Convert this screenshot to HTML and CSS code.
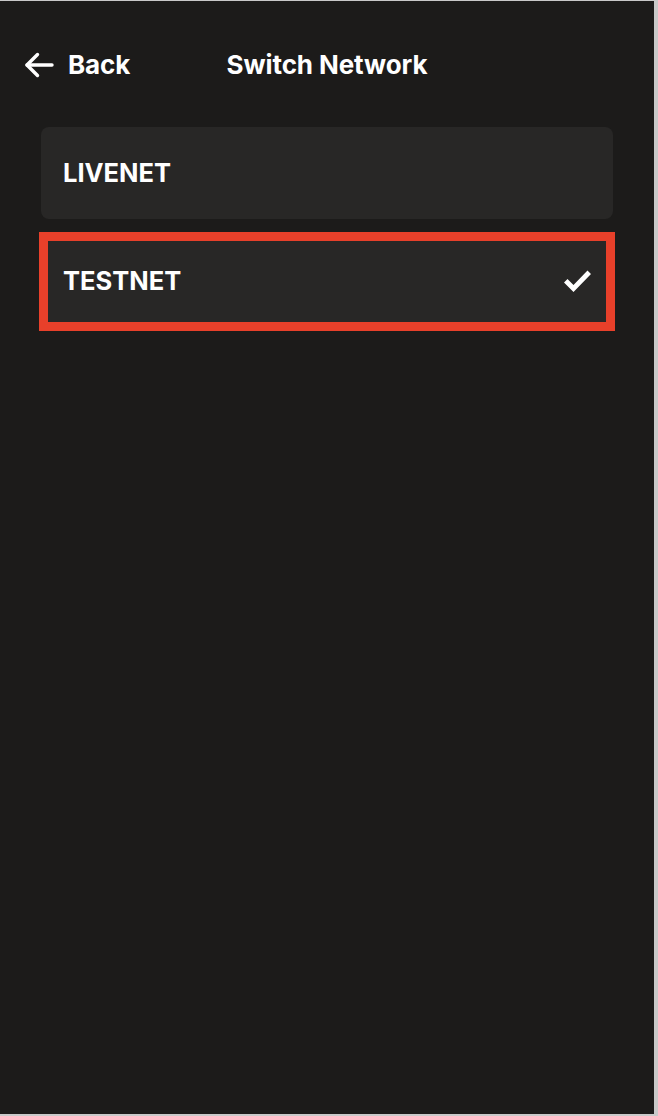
FILE: index.html
```html
<!DOCTYPE html>
<html>
<head>
<meta charset="utf-8">
<link rel="stylesheet" href="styles.css">
</head>
<body>
<div class="app">
  <header class="header">
    <div class="back">
      <svg class="back-icon" width="30" height="26" viewBox="0 0 30 26" fill="none" stroke="#fff" stroke-width="3.4" stroke-linecap="round" stroke-linejoin="round">
        <path d="M28 13H3"/>
        <path d="M13.5 2.5L3 13l10.5 10.5"/>
      </svg>
      <span class="back-label">Back</span>
    </div>
    <h1 class="title">Switch Network</h1>
    <div class="spacer"></div>
  </header>
  <main class="list">
    <div class="item">
      <span class="item-label">LIVENET</span>
    </div>
    <div class="item selected">
      <span class="item-label">TESTNET</span>
      <svg class="check" width="29" height="24" viewBox="0 0 29 24">
        <path d="M1 13.5L4.5 10 10.5 16 24.5 1.5 28 5 10.5 23z" fill="#fff"/>
      </svg>
    </div>
  </main>
</div>
</body>
</html>
```
FILE: styles.css
```css
* { box-sizing: border-box; }
html, body { margin: 0; padding: 0; }
body {
  background: #c9c9c9;
  width: 658px;
  height: 1116px;
  overflow: hidden;
  font-family: Inter, "Noto Sans", sans-serif;
}
.app {
  margin: 1px 4px 2px 0;
  height: 1113px;
  background: #1c1b1a;
  color: #fff;
}
.header {
  display: grid;
  grid-template-columns: 1fr auto 1fr;
  align-items: center;
  height: 126px;
  padding: 0 24px;
}
.back {
  display: flex;
  align-items: center;
  gap: 14px;
  margin-top: 2px;
}
.back-icon { display: block; }
.back-label, .title {
  font-size: 26px;
  font-weight: 700;
  line-height: 1;
  letter-spacing: -0.1px;
}
.title { margin: 0; margin-top: 2px; }
.list {
  display: flex;
  flex-direction: column;
  gap: 14px;
  padding: 0 41px;
}
.item {
  position: relative;
  height: 92px;
  background: #282726;
  border-radius: 8px;
  display: flex;
  align-items: center;
  justify-content: space-between;
  padding: 0 22px;
}
.item-label {
  font-size: 25.5px;
  font-weight: 700;
  line-height: 1;
}
.selected {
  border-radius: 0;
  padding-top: 3px;
}
.selected::after {
  content: "";
  position: absolute;
  left: -2px;
  right: -2px;
  top: -1px;
  bottom: -6px;
  border: 9px solid #e8402a;
  pointer-events: none;
}
.check { display: block; margin-right: -1px; }
```
